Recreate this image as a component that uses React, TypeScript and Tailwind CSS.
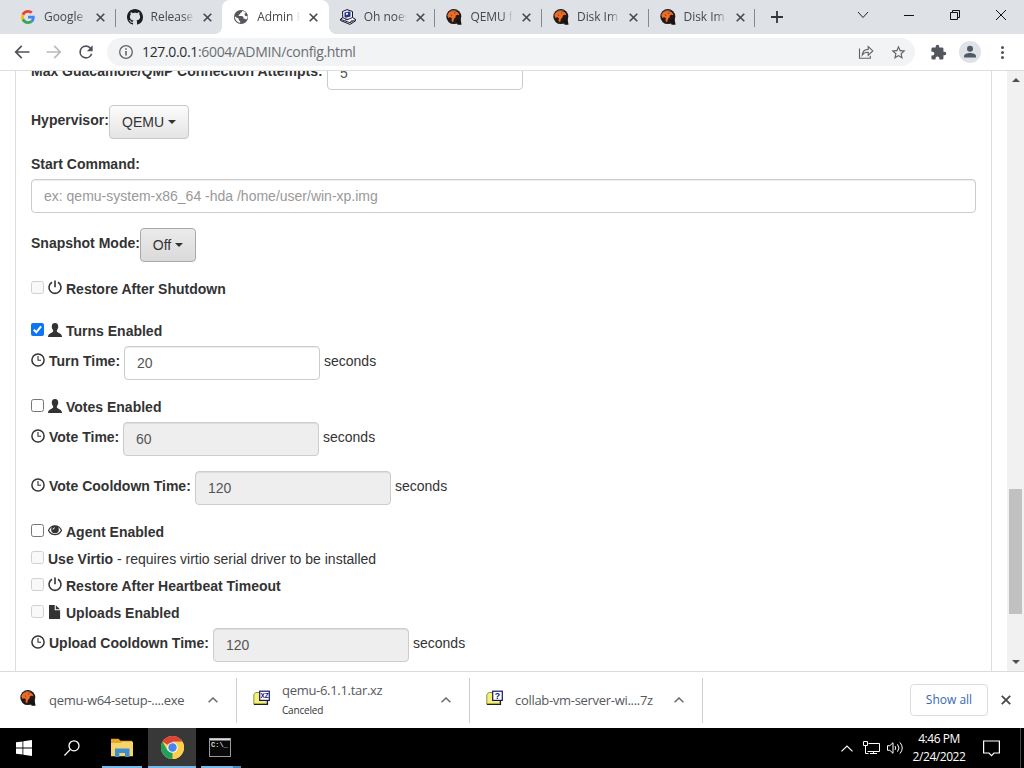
import { ReactNode } from "react";

/* ---------- favicons and file icons ---------- */

function GoogleIcon() {
  return (
    <svg viewBox="0 0 48 48" className="h-[14px] w-[14px]">
      <path fill="#EA4335" d="M24 9.5c3.54 0 6.71 1.22 9.21 3.6l6.85-6.85C35.9 2.38 30.47 0 24 0 14.62 0 6.51 5.38 2.56 13.22l7.98 6.19C12.43 13.72 17.74 9.5 24 9.5z" />
      <path fill="#4285F4" d="M46.98 24.55c0-1.57-.15-3.09-.38-4.55H24v9.02h12.94c-.58 2.96-2.26 5.48-4.78 7.18l7.73 6c4.51-4.18 7.09-10.36 7.09-17.65z" />
      <path fill="#FBBC05" d="M10.53 28.59c-.48-1.45-.76-2.99-.76-4.59s.27-3.14.76-4.59l-7.98-6.19C.92 16.46 0 20.12 0 24c0 3.88.92 7.54 2.56 10.78l7.97-6.19z" />
      <path fill="#34A853" d="M24 48c6.48 0 11.93-2.13 15.89-5.81l-7.73-6c-2.15 1.45-4.92 2.3-8.16 2.3-6.26 0-11.57-4.22-13.47-9.91l-7.98 6.19C6.51 42.62 14.62 48 24 48z" />
    </svg>
  );
}

function GithubIcon() {
  return (
    <svg viewBox="0 0 16 16" className="h-4 w-4" fill="#1b1f23">
      <path d="M8 0C3.58 0 0 3.58 0 8c0 3.54 2.29 6.53 5.47 7.59.4.07.55-.17.55-.38 0-.19-.01-.82-.01-1.49-2.01.37-2.53-.49-2.69-.94-.09-.23-.48-.94-.82-1.13-.28-.15-.68-.52-.01-.53.63-.01 1.08.58 1.23.82.72 1.21 1.87.87 2.33.66.07-.52.28-.87.51-1.07-1.78-.2-3.64-.89-3.64-3.95 0-.87.31-1.59.82-2.15-.08-.2-.36-1.02.08-2.12 0 0 .67-.21 2.2.82.64-.18 1.32-.27 2-.27s1.36.09 2 .27c1.53-1.04 2.2-.82 2.2-.82.44 1.1.16 1.92.08 2.12.51.56.82 1.27.82 2.15 0 3.07-1.87 3.75-3.65 3.95.29.25.54.73.54 1.48 0 1.07-.01 1.93-.01 2.2 0 .21.15.46.55.38A8.01 8.01 0 0 0 16 8c0-4.42-3.58-8-8-8z" />
    </svg>
  );
}

function GlobeIcon() {
  return (
    <svg viewBox="0 0 16 16" className="h-4 w-4">
      <circle cx="8" cy="8" r="7.1" fill="#54585d" />
      <path fill="#fff" d="M9.300 1.900 8.600 3.400 7.200 4v1.300l-1.500.5v1.100h3.500l1.400 1.500v1.400h1.700l.8.900 1.300-1.800.2-1.800-1.800.2-1.200-1.200V4.600l1.300-.6-1-1.200zM1.900 7.300l-.1 1.300 1 2.500 1.900 2 2.500 1v-1.800L5.700 11V9.600L3.400 8.500z" />
    </svg>
  );
}

function ComputerIcon() {
  return (
    <svg viewBox="0 0 16 16" className="h-4 w-4">
      <path fill="#f1f2f7" stroke="#15152e" strokeWidth="1" d="M2.500 2.500 7 .6l5.500 1.900v6l3 1.800v1.600L10 15.400.6 11.500V10l2.200-1.200z" />
      <path fill="#27348b" d="M4.500 3.600 9 2.500l1.500.6v4.400L6 8.800 4.500 8z" />
      <path fill="#fff" d="m6 4.200 2-.5v1.900l-2 .5z" />
      <path fill="none" stroke="#15152e" strokeWidth=".9" d="m.8 10.500 9.200 3.200 5.300-3M3 8.800l4.500 1.800 4.800-2M5 11.200l3-1M10.500 12.500l2-1" />
    </svg>
  );
}

function QemuIcon() {
  return (
    <svg viewBox="0 0 16 16" className="h-4 w-4">
      <circle cx="7.800" cy="7.600" r="7.500" fill="#221815" />
      <path fill="#17110f" d="M10 11.500 14.500 9.500l1 6.200h-3.900z" />
      <path fill="#8b8b8b" d="M3 2.700C5 .9 9 .4 11.700 2L8.500 1.900z" opacity=".6" />
      <path fill="#ef6c25" d="M1.300 6.200C2 3.600 4.600 2 7.700 2.100c2.400 0 4.300 1 5.200 2.600l.4 1.600-1.900-.6-1.600.8-.2 1.800-1.500 1.500L7 13.400l-1.500-1.700.3-2.700-1.700-.7-1.700.8z" />
      <path fill="#3a1d10" d="m7.900 3.700 1.800.1-.9.9zM4.600 5.500l1.800.6-.7.6z" />
    </svg>
  );
}

function ArchiveIcon({ label }: { label: string }) {
  return (
    <svg viewBox="0 0 17 16" className="h-4 w-[17px]">
      <path fill="#f4f177" stroke="#77772d" strokeWidth=".8" d="M.8 4.400 2.900 2.500h4.400V4h6.800v10.300H.8z" />
      <path stroke="#222" strokeWidth="1.200" d="M1 14.400h13.500V11" fill="none" />
      <rect x="6.700" y="1.200" width="9.600" height="9.200" fill="#fff" stroke="#15156c" strokeWidth="1.200" />
      <text
        x="11.500"
        y={label.length > 1 ? 8.200 : 8.800}
        textAnchor="middle"
        fontFamily="Liberation Sans, sans-serif"
        fontWeight="700"
        fontSize={label.length > 1 ? 6.400 : 8.800}
        fill="#10107c"
      >
        {label}
      </text>
    </svg>
  );
}

/* ---------- form glyphs ---------- */

function PowerGlyph() {
  return (
    <svg viewBox="0 0 14 14" className="h-[14px] w-[14px] shrink-0 overflow-visible" fill="none" stroke="#333" strokeWidth="1.600">
      <path d="M4 1.200a6 6 0 1 0 6 0M7 -.4v6.700" />
    </svg>
  );
}

function UserGlyph() {
  return (
    <svg viewBox="0 0 14 14" className="h-[14px] w-[14px] shrink-0" fill="#333">
      <path d="M7 0C4.700 0 3.700 1.600 3.800 3.600c0 1.100.1 1.800.7 2.700.5.800.7 1.200.7 1.800 0 .700-.5 1-1.200 1.300C1.800 10.400.5 11 .2 12.700L0 14h14l-.2-1.300c-.3-1.700-1.600-2.300-3.800-3.300-.7-.3-1.200-.6-1.200-1.300 0-.6.2-1 .7-1.800.6-.9.7-1.600.7-2.700C10.300 1.600 9.300 0 7 0z" />
    </svg>
  );
}

function ClockGlyph() {
  return (
    <svg viewBox="0 0 14 14" className="h-[14px] w-[14px] shrink-0" fill="none" stroke="#333">
      <circle cx="7" cy="7" r="6.100" strokeWidth="1.500" />
      <path d="M7 3v4.300h3" strokeWidth="1.100" />
    </svg>
  );
}

function EyeGlyph() {
  return (
    <svg viewBox="0 0 14 14" className="h-[14px] w-[14px] shrink-0">
      <path d="M.5 6.300C3.300.3 10.700.3 13.500 6.300 10.500 12 3.500 12 .5 6.300z" fill="#fff" stroke="#333" strokeWidth="1.200" />
      <circle cx="7" cy="5.500" r="3.800" fill="#333" />
      <path d="M5 5.700A2 2 0 0 1 6.800 3.800" stroke="#fff" strokeWidth="1" fill="none" />
    </svg>
  );
}

function FileGlyph() {
  return (
    <svg viewBox="0 0 14 14" className="h-[14px] w-[14px] shrink-0" fill="#333">
      <path d="M1 0h5.700v5.300h5.400V14H1zM7.800.2l4.100 4.100H7.800z" />
    </svg>
  );
}

/* ---------- browser chrome ---------- */

function CloseX({ className = "h-[9px] w-[9px]" }: { className?: string }) {
  return (
    <svg viewBox="0 0 9 9" className={className} stroke="#45484c" strokeWidth="1.600">
      <path d="m.7.7 7.600 7.600M8.300.7.7 8.300" />
    </svg>
  );
}

interface TabProps {
  title: string;
  icon: ReactNode;
  active?: boolean;
  divider?: boolean;
}

function Tab({ title, icon, active, divider = true }: TabProps) {
  return (
    <div
      className={`relative flex h-[34px] w-[106.600px] shrink-0 items-center pl-[11px] ${
        active ? "rounded-t-lg bg-white" : ""
      }`}
    >
      {active && (
        <>
          <span className="absolute bottom-0 -left-2 h-2 w-2 bg-[radial-gradient(circle_at_0_0,transparent_8px,white_8px)]" />
          <span className="absolute -right-2 bottom-0 h-2 w-2 bg-[radial-gradient(circle_at_100%_0,transparent_8px,white_8px)]" />
        </>
      )}
      <span className="flex w-4 justify-center">{icon}</span>
      <span className="ml-2 w-[43px] mask-r-from-75% text-[12px] tracking-[-0.050px] whitespace-nowrap text-[#45494d]">
        {title}
      </span>
      <span className="ml-[9px]">
        <CloseX />
      </span>
      {divider && <span className="absolute top-[9px] right-0 h-[18px] w-px bg-[#85888c]" />}
    </div>
  );
}

function TabStrip() {
  return (
    <div className="flex h-[34px] bg-[#dee1e6] pl-[9px]">
      <Tab title="Google" icon={<GoogleIcon />} />
      <Tab title="Release" icon={<GithubIcon />} divider={false} />
      <Tab title="Admin P" icon={<GlobeIcon />} active divider={false} />
      <Tab title="Oh noes" icon={<ComputerIcon />} />
      <Tab title="QEMU f" icon={<QemuIcon />} />
      <Tab title="Disk Im" icon={<QemuIcon />} />
      <Tab title="Disk Im" icon={<QemuIcon />} />
      <svg viewBox="0 0 12 12" className="mt-[11px] ml-[16px] h-3 w-3 shrink-0" stroke="#333639" strokeWidth="1.800">
        <path d="M6 0v12M0 6h12" />
      </svg>
      <div className="mt-[9px] ml-auto flex h-[11px] items-center pr-[18px]">
        <svg viewBox="0 0 12 12" className="mr-[35px] h-3 w-3" fill="none" stroke="#222">
          <path d="m1 3 5 5.500L11 3" />
        </svg>
        <svg viewBox="0 0 10 10" className="mr-[36px] h-[10px] w-[10px]" stroke="#111">
          <path d="M0 5.500h10" />
        </svg>
        <svg viewBox="0 0 10 10" className="mr-[36px] h-[10px] w-[10px]" fill="none" stroke="#111">
          <path d="M.5 2.500h7v7h-7zM2.500 2.500v-2h7v7h-2" />
        </svg>
        <svg viewBox="0 0 10 10" className="h-[10px] w-[10px]" stroke="#111">
          <path d="m0 0 10 10M10 0 0 10" />
        </svg>
      </div>
    </div>
  );
}

function Toolbar() {
  return (
    <div className="flex h-[37px] items-center border-b border-[#dcdde0] bg-white pr-[10px] pl-[12px]">
      <svg viewBox="0 0 24 24" className="h-5 w-5" fill="#4f5358">
        <path d="M21 11H6.800l5.600-5.600L11 4l-8 8 8 8 1.400-1.400L6.800 13H21z" />
      </svg>
      <svg viewBox="0 0 24 24" className="ml-3 h-5 w-5" fill="#b9bbbe">
        <path d="M3 11h14.200l-5.600-5.600L13 4l8 8-8 8-1.400-1.400 5.600-5.600H3z" />
      </svg>
      <svg viewBox="0 0 24 24" className="ml-3 h-5 w-5" fill="#4f5358">
        <path d="M17.650 6.350A7.960 7.960 0 0 0 12 4a8 8 0 1 0 7.730 10h-2.080A6 6 0 1 1 12 6c1.660 0 3.140.690 4.220 1.780L13 11h7V4z" />
      </svg>
      <div className="ml-[11px] flex h-7 w-[808px] items-center rounded-full bg-[#f1f3f4] pl-2 text-[#5f6368]">
        <svg viewBox="0 0 16 16" className="ml-[3px] h-4 w-4" fill="none" stroke="#5f6368" strokeWidth="1.300">
          <circle cx="8" cy="8" r="6.300" />
          <path d="M8 7v4.500M8 4.300v1.500" strokeWidth="1.600" />
        </svg>
        <span className="ml-2 -mt-px text-[14px] tracking-[-0.340px] whitespace-nowrap text-[#6a6e73]">
          <span className="text-[#2b2e31]">127.0.0.1</span>:6004/ADMIN/config.html
        </span>
        <svg viewBox="0 0 16 16" className="mr-4 ml-auto h-4 w-4" fill="none" stroke="#5f6368" strokeWidth="1.100">
          <path d="M1.500 4.500v9.800h10.800v-2.500M4.300 11c.300-3.400 2.300-5.500 5.900-5.600V2.500l4.600 4.400-4.600 4.300V8.300C7.700 8.200 5.700 9 4.300 11z" />
        </svg>
        <svg viewBox="0 0 24 24" className="mr-[8px] h-[17px] w-[17px]" fill="#5f6368">
          <path d="m22 9.240-7.190-.620L12 2 9.190 8.630 2 9.240l5.460 4.730L5.820 21 12 17.270 18.180 21l-1.630-7.030zM12 15.400l-3.760 2.270 1-4.280-3.320-2.880 4.380-.380L12 6.100l1.710 4.040 4.380.380-3.320 2.880 1 4.280z" />
        </svg>
      </div>
      <svg viewBox="0 0 24 24" className="ml-[15px] h-[17px] w-[17px]" fill="#53575c">
        <path d="M20.500 11H19V7a2 2 0 0 0-2-2h-4V3.500a2.500 2.500 0 0 0-5 0V5H4a2 2 0 0 0-2 2v3.800h1.500a2.700 2.700 0 0 1 0 5.400H2V20a2 2 0 0 0 2 2h3.800v-1.500a2.700 2.700 0 0 1 5.400 0V22H17a2 2 0 0 0 2-2v-4h1.500a2.500 2.500 0 0 0 0-5z" />
      </svg>
      <span className="ml-[12px] flex h-[22px] w-[22px] items-center justify-center rounded-full bg-[#dfe2e6]">
        <svg viewBox="0 0 16 16" className="h-[16px] w-[16px]" fill="#505966">
          <circle cx="8" cy="4.800" r="3" />
          <path d="M2 13.500v-1.300C2 10.200 5.300 9 8 9s6 1.200 6 3.200v1.300z" />
        </svg>
      </span>
      <span className="ml-auto flex w-6 flex-col items-center gap-[2px]">
        <i className="h-[3px] w-[3px] rounded-full bg-[#505458]" />
        <i className="h-[3px] w-[3px] rounded-full bg-[#505458]" />
        <i className="h-[3px] w-[3px] rounded-full bg-[#505458]" />
      </span>
    </div>
  );
}

/* ---------- settings form ---------- */

interface FieldProps {
  label: string;
  value: string;
  labelClass: string;
  className?: string;
  disabled?: boolean;
  clock?: boolean;
  unit?: string;
}

function Field({ label, value, labelClass, className = "", disabled, clock = true, unit = "seconds" }: FieldProps) {
  return (
    <div className={`flex h-[34px] items-start ${className}`}>
      <div className={`flex shrink-0 items-start gap-1 pt-[5px] ${labelClass}`}>
        {clock && (
          <span className="mt-[2px]">
            <ClockGlyph />
          </span>
        )}
        <b className="whitespace-nowrap">{label}</b>
      </div>
      <div
        className={`flex h-[34px] w-[196px] items-center rounded border border-[#ccc] px-3 text-[#555] shadow-[inset_0_1px_1px_rgba(0,0,0,0.075)] ${
          disabled ? "bg-[#eee]" : "bg-white"
        }`}
      >
        {value}
      </div>
      <span className="ml-1 pt-[5px]">{unit}</span>
    </div>
  );
}

interface CheckRowProps {
  label: string;
  icon?: ReactNode;
  note?: string;
  checked?: boolean;
  disabled?: boolean;
  className?: string;
}

function CheckRow({ label, icon, note, checked, disabled, className = "" }: CheckRowProps) {
  return (
    <div className={`flex h-5 items-start gap-1 ${className}`}>
      {checked ? (
        <span className="mt-[2px] h-[13px] w-[13px] shrink-0 rounded-[2px] bg-[#0b75f5]">
          <svg viewBox="0 0 13 13" fill="none" stroke="#fff" strokeWidth="2">
            <path d="m2.800 6.700 2.500 2.600 4.800-6" />
          </svg>
        </span>
      ) : (
        <span
          className={`mt-[2px] h-[13px] w-[13px] shrink-0 rounded-[2.500px] border ${
            disabled ? "border-[#d0d0d0] bg-[#f9f9f9]" : "border-[#767676] bg-white"
          }`}
        />
      )}
      {icon && <span className="mt-[2px]">{icon}</span>}
      <span className="whitespace-nowrap">
        <b>{label}</b>
        {note}
      </span>
    </div>
  );
}

function DropdownButton({ label, className }: { label: string; className: string }) {
  return (
    <div className={`flex h-[34px] items-center justify-center rounded border ${className}`}>
      {label}
      <span className="ml-1 border-x-4 border-t-4 border-x-transparent border-t-[#333]" />
    </div>
  );
}

function ConfigForm() {
  return (
    <div className="mx-[15px] h-[600px] w-[977px] border-x border-[#ddd] px-[15px] font-['Liberation_Sans',Arial,sans-serif] text-[14px] leading-5 text-[#333]">
      <Field
        label="Max Guacamole/QMP Connection Attempts:"
        value="5"
        labelClass="w-[296px]"
        className="-mt-[15px]"
        clock={false}
        unit=""
      />
      <div className="mt-[15px] flex h-[34px] items-start">
        <b className="w-[78px] pt-[5px] whitespace-nowrap">Hypervisor:</b>
        <DropdownButton label="QEMU" className="w-[80px] border-[#c8c8c8] bg-linear-to-b from-[#fcfcfc] to-[#e4e4e4]" />
      </div>
      <b className="mt-[15px] block h-[25px]">Start Command:</b>
      <div className="flex h-[34px] w-[945px] items-center rounded border border-[#ccc] px-3 text-[#999] shadow-[inset_0_1px_1px_rgba(0,0,0,0.075)]">
        ex: qemu-system-x86_64 -hda /home/user/win-xp.img
      </div>
      <div className="mt-[15px] flex h-[34px] items-start">
        <b className="w-[109px] pt-[5px] whitespace-nowrap">Snapshot Mode:</b>
        <DropdownButton label="Off" className="w-[56px] border-[#a8a8a8] bg-linear-to-b from-[#ebebeb] to-[#dadada]" />
      </div>

      <CheckRow label="Restore After Shutdown" icon={<PowerGlyph />} disabled className="mt-[17px]" />
      <CheckRow label="Turns Enabled" icon={<UserGlyph />} checked className="mt-[22px]" />
      <Field label="Turn Time:" value="20" labelClass="w-[93px]" className="mt-[5px]" />
      <CheckRow label="Votes Enabled" icon={<UserGlyph />} className="mt-[17px]" />
      <Field label="Vote Time:" value="60" labelClass="w-[92px]" className="mt-[5px]" disabled />
      <Field label="Vote Cooldown Time:" value="120" labelClass="w-[164px]" className="mt-[15px]" disabled />
      <CheckRow label="Agent Enabled" icon={<EyeGlyph />} className="mt-[17px]" />
      <CheckRow label="Use Virtio" note=" - requires virtio serial driver to be installed" disabled className="mt-[7px]" />
      <CheckRow label="Restore After Heartbeat Timeout" icon={<PowerGlyph />} disabled className="mt-[7px]" />
      <CheckRow label="Uploads Enabled" icon={<FileGlyph />} disabled className="mt-[7px]" />
      <Field label="Upload Cooldown Time:" value="120" labelClass="w-[182px]" className="mt-[5px]" disabled />
    </div>
  );
}

function Scrollbar() {
  return (
    <div className="ml-auto flex w-[17px] flex-col items-center bg-[#f1f1f1]">
      <span className="mt-[7px] border-x-4 border-b-4 border-x-transparent border-b-[#505050]" />
      <span className="mt-[407px] h-[125px] w-[13px] bg-[#c1c1c1]" />
      <span className="mt-auto mb-[7px] border-x-4 border-t-4 border-x-transparent border-t-[#505050]" />
    </div>
  );
}

/* ---------- downloads shelf ---------- */

interface DownloadProps {
  name: string;
  icon: ReactNode;
  status?: string;
  className: string;
}

function Download({ name, icon, status, className }: DownloadProps) {
  return (
    <div className={`flex h-[45px] items-center border-r border-[#cdcfd2] pr-[18px] ${className}`}>
      <span className="-mt-[4px] w-[17px]">{icon}</span>
      <div className="ml-3 whitespace-nowrap text-[#55595e]">
        <div className="text-[13px] leading-5 tracking-[-0.300px]">{name}</div>
        {status && <div className="text-[10px] leading-5 tracking-[-0.200px] text-[#333]">{status}</div>}
      </div>
      <svg viewBox="0 0 10 6" className="ml-auto h-[6px] w-[10px]" fill="none" stroke="#6c7075" strokeWidth="1.600">
        <path d="m.6 5.300L5 1l4.400 4.300" />
      </svg>
    </div>
  );
}

function DownloadShelf() {
  return (
    <div className="flex h-[57px] items-center border-t border-[#dadcdf] bg-white">
      <Download name="qemu-w64-setup-....exe" icon={<QemuIcon />} className="w-[237px] pl-5" />
      <Download name="qemu-6.1.1.tar.xz" icon={<ArchiveIcon label="XZ" />} status="Canceled" className="w-[233px] pl-4" />
      <Download name="collab-vm-server-wi....7z" icon={<ArchiveIcon label="?" />} className="w-[233px] pl-4" />
      <div className="mr-[13px] ml-auto flex items-center">
        <span className="flex h-8 w-[78px] items-center justify-center rounded border border-[#dadce0] text-[12px] font-medium text-[#3867b5]">
          Show all
        </span>
        <CloseX className="ml-[13px] h-[10px] w-[10px]" />
      </div>
    </div>
  );
}

/* ---------- windows taskbar ---------- */

function ChromeIcon() {
  return (
    <svg viewBox="0 0 24 24" className="h-[23px] w-[23px]">
      <circle cx="12" cy="12" r="12" fill="#fcd04b" />
      <path fill="#dc4437" d="M12 12 1.600 6A12 12 0 0 1 22.400 6H12z" />
      <path fill="#20a15b" d="M1.600 6 6.800 15 12 17.500 12 24A12 12 0 0 1 1.600 6z" />
      <path fill="#fcd04b" d="M22.400 6H12l5.200 9L12 24A12 12 0 0 0 22.400 6z" />
      <circle cx="12" cy="12" r="5.600" fill="#f5f5f5" />
      <circle cx="12" cy="12" r="4.400" fill="#4487f0" />
    </svg>
  );
}

function Taskbar() {
  return (
    <div className="flex h-10 bg-black text-white">
      <span className="flex w-12 items-center justify-center">
        <svg viewBox="0 0 16 16" className="h-4 w-4" fill="#fff">
          <path d="m0 2.300 6.500-.9v6.100H0zM7.300 1.300 16 0v7.500H7.300zM0 8.400h6.500v6.200L0 13.700zM7.300 8.400H16V16l-8.700-1.200z" />
        </svg>
      </span>
      <span className="flex w-12 items-center justify-center">
        <svg viewBox="0 0 16 16" className="h-4 w-4" fill="none" stroke="#fff" strokeWidth="1.300">
          <circle cx="10" cy="5.800" r="5" />
          <path d="M6.400 9.400.4 15.500" />
        </svg>
      </span>
      <span className="flex w-[52px] flex-col items-center">
        <svg viewBox="0 0 22 20" className="mt-[10px] h-5 w-[22px]">
          <path fill="#e3a72c" d="M0 .8h7.500l2 2H21V6H0z" />
          <path fill="#f8d36b" d="M0 5h9.500l2-1.300H22v14.500H0z" />
          <path fill="#3b8fd0" d="M4 10.500h14.500V19H14v-4H8.300v4H4z" />
        </svg>
        <span className="mt-auto h-[2px] w-10 bg-[#76b9ed]" />
      </span>
      <span className="flex w-12 flex-col items-center bg-[#383838]">
        <span className="mt-2">
          <ChromeIcon />
        </span>
        <span className="mt-auto h-[2px] w-full bg-[#76b9ed]" />
      </span>
      <span className="ml-[5px] flex w-10 flex-col items-center">
        <svg viewBox="0 0 22 19" className="mt-[10px] mr-[2px] h-[19px] w-[22px]">
          <rect x=".5" y=".5" width="21" height="18" fill="#090909" stroke="#9a9a9a" />
          <path d="M1 1.500h20" stroke="#d9d9d9" strokeWidth="2" />
          <text x="2" y="9" fontFamily="Liberation Mono, monospace" fontSize="7" fontWeight="700" fill="#ddd">
            C:\_
          </text>
        </svg>
        <span className="mt-auto flex h-[2px] w-full bg-[#76b9ed]">
          <i className="ml-auto h-[2px] w-[8px] bg-[#4a86b6]" />
        </span>
      </span>
      <div className="ml-auto flex items-center">
        <svg viewBox="0 0 12 7" className="h-[7px] w-3" fill="none" stroke="#fff" strokeWidth="1.200">
          <path d="m.5 6.400L6 1l5.500 5.400" />
        </svg>
        <svg viewBox="0 0 17 14" className="ml-[10px] h-[14px] w-[17px]" fill="none" stroke="#fff">
          <path d="M5.500 2.500h11v8H4.500M.5.500h4v4h-4zM2.500 4.500v8h3M10.500 10.500v2M7 12.500h7" />
        </svg>
        <svg viewBox="0 0 17 14" className="ml-[7px] h-[14px] w-[17px]" fill="none" stroke="#fff">
          <path d="M.5 4.700h2.300L6 1.700v10.600l-3.200-3H.5zM8 5q1.500 2 0 4M10.500 3.300q3 3.700 0 7.400M13 1.500q4.500 5.500 0 11" />
        </svg>
        <div className="ml-[8px] w-[54px] text-center text-[12px] leading-[18px] tracking-[-0.450px] whitespace-nowrap">
          <div>4:46 PM</div>
          <div>2/24/2022</div>
        </div>
        <svg viewBox="0 0 17 17" className="mr-[20px] ml-[17px] h-[17px] w-[17px]" fill="none" stroke="#fff" strokeWidth="1.200">
          <path d="M.6 1h15.800v12H11l-2.500 2.700L6 13H.6z" />
        </svg>
        <span className="mr-[3px] h-10 w-px bg-[#444]" />
      </div>
    </div>
  );
}

export default function App() {
  return (
    <div className="h-[768px] w-[1024px] overflow-hidden bg-white font-['Open_Sans','Noto_Sans',sans-serif]">
      <TabStrip />
      <Toolbar />
      <main className="flex h-[600px] overflow-hidden bg-white">
        <ConfigForm />
        <Scrollbar />
      </main>
      <DownloadShelf />
      <Taskbar />
    </div>
  );
}
